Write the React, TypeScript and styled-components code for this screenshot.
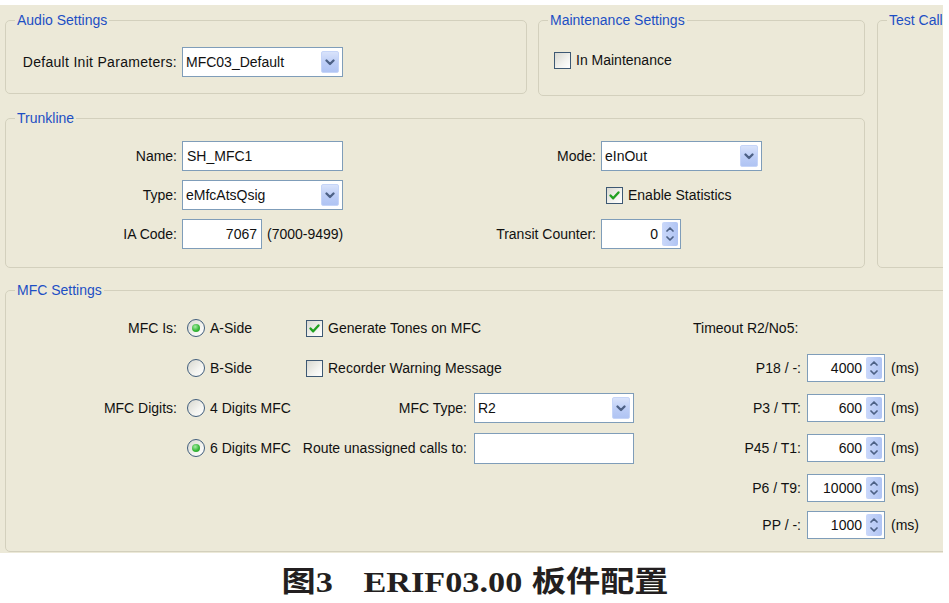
import React from "react";
import styled, { createGlobalStyle } from "styled-components";

const Global = createGlobalStyle`
  html, body { margin: 0; padding: 0; background: #fff; }
  body {
    font-family: "Liberation Sans", Arial, sans-serif;
    font-size: 14px;
    color: #111;
  }
  * { box-sizing: border-box; }
`;

const Screen = styled.div`
  width: 949px;
  height: 603px;
  display: flex;
  flex-direction: column;
  overflow: hidden;
`;

const Panel = styled.div`
  margin-top: 5px;
  width: 943px;
  height: 548px;
  flex: none;
  background: #ece9d8;
  overflow: hidden;
  display: grid;
  grid-template-columns: 860px 100px;
  column-gap: 12px;
  row-gap: 14px;
  align-content: start;
  padding: 7px 0 0 5px;
`;

const LeftColumn = styled.div`
  display: flex;
  flex-direction: column;
  gap: 14px;
`;

const TopRow = styled.div`
  display: flex;
  gap: 11px;
  align-items: flex-start;
`;

const Group = styled.fieldset<{ $w?: number; $h: number; $span?: boolean }>`
  margin: 0;
  padding: 0;
  min-width: 0;
  width: ${(p) => (p.$w ? `${p.$w}px` : "auto")};
  height: ${(p) => p.$h}px;
  border: 1px solid #d3d0bd;
  border-radius: 5px;
  ${(p) => (p.$span ? "grid-column: 1 / -1;" : "")}
`;

const Legend = styled.legend`
  margin-left: 9px;
  padding: 0 2px;
  color: #1d4fc4;
  font-size: 14px;
  line-height: 16px;
`;

const Body = styled.div<{ $t: number; $l: number }>`
  padding: ${(p) => p.$t}px 0 0 ${(p) => p.$l}px;
`;

const Row = styled.div`
  display: flex;
  align-items: center;
  gap: 5px;
  height: 30px;
`;

const FieldLabel = styled.span<{ $w?: number; $spread?: boolean }>`
  white-space: nowrap;
  text-align: right;
  ${(p) => (p.$w ? `width: ${p.$w}px; flex: none;` : "")}
  ${(p) => (p.$spread ? "letter-spacing: 0.3px;" : "")}
`;

const Plain = styled.span`
  white-space: nowrap;
`;

/* ---------- controls ---------- */

const TextField = styled.div<{ $w: number; $h?: number; $right?: boolean }>`
  width: ${(p) => p.$w}px;
  height: ${(p) => p.$h ?? 30}px;
  flex: none;
  display: flex;
  align-items: center;
  justify-content: ${(p) => (p.$right ? "flex-end" : "flex-start")};
  padding: 0 4px;
  border: 1px solid #7f9db9;
  background: #fff;
  white-space: nowrap;
`;

const SelectBox = styled.div<{ $w: number; $h?: number }>`
  width: ${(p) => p.$w}px;
  height: ${(p) => p.$h ?? 30}px;
  flex: none;
  display: flex;
  border: 1px solid #7f9db9;
  background: #fff;
`;

const SelectValue = styled.span`
  flex: 1;
  align-self: center;
  padding-left: 3px;
  white-space: nowrap;
  overflow: hidden;
`;

const DropButton = styled.span`
  width: 18px;
  flex: none;
  margin: 3px 3px 3px 0;
  border-radius: 2px;
  border: 1px solid #c6d5f8;
  background: linear-gradient(180deg, #d9e3fb 0%, #bccdf6 55%, #b0c4f3 100%);
  display: flex;
  align-items: center;
  justify-content: center;
`;

const SpinBox = styled.div<{ $w: number; $h?: number }>`
  width: ${(p) => p.$w}px;
  height: ${(p) => p.$h ?? 30}px;
  flex: none;
  display: flex;
  border: 1px solid #7f9db9;
  background: #fff;
`;

const SpinValue = styled.span`
  flex: 1;
  align-self: center;
  text-align: right;
  padding-right: 4px;
  white-space: nowrap;
`;

const SpinButtons = styled.span`
  width: 16px;
  flex: none;
  margin: 2px 2px 2px 0;
  border-radius: 2px;
  background: linear-gradient(90deg, #cad8fa 0%, #b0c4f3 100%);
  display: flex;
  flex-direction: column;
  align-items: center;
  justify-content: space-evenly;
`;

const Option = styled.label`
  display: flex;
  align-items: center;
  gap: 5px;
  white-space: nowrap;
`;

const CheckBox = styled.span`
  width: 17px;
  height: 17px;
  flex: none;
  border: 1px solid #3d5873;
  background: linear-gradient(135deg, #d8d8d0 0%, #f3f3ef 60%, #ffffff 100%);
  display: inline-flex;
  align-items: center;
  justify-content: center;
`;

const RadioCircle = styled.span`
  width: 18px;
  height: 18px;
  flex: none;
  border-radius: 50%;
  border: 1px solid #405d7c;
  background: linear-gradient(135deg, #d6d6ce 0%, #f4f4f0 60%, #ffffff 100%);
  display: inline-flex;
  align-items: center;
  justify-content: center;
`;

const RadioDot = styled.span`
  width: 8px;
  height: 8px;
  border-radius: 50%;
  background: radial-gradient(circle at 40% 35%, #a4eca4 0%, #38b838 55%, #1f9a1f 100%);
`;

/* ---------- layout of groups ---------- */

const TrunkGrid = styled.div`
  display: grid;
  grid-template-columns: 171px 161px 248px 161px;
  grid-auto-rows: 30px;
  column-gap: 5px;
  row-gap: 9px;
  align-items: center;
`;

const Indent = styled.div<{ $l: number }>`
  padding-left: ${(p) => p.$l}px;
  display: flex;
  align-items: center;
  gap: 7px;
`;

const MfcBody = styled.div`
  display: flex;
  align-items: flex-start;
  padding: 15px 0 0 0;
`;

const MfcGrid = styled.div`
  display: grid;
  grid-template-columns: 171px 123px 338px;
  grid-auto-rows: 30px;
  row-gap: 10px;
  align-items: center;
`;

const TimeoutGrid = styled.div`
  margin-left: 55px;
  display: grid;
  grid-template-columns: 108px 78px auto;
  grid-template-rows: repeat(5, 30px) 24px;
  column-gap: 6px;
  row-gap: 10px;
  align-items: center;
`;

const TimeoutTitle = styled.span`
  grid-column: 1 / -1;
  white-space: nowrap;
`;

const Caption = styled.div`
  flex: 1;
  display: flex;
  align-items: center;
  justify-content: center;
  padding: 9px 0 0 2px;
`;

const CaptionText = styled.div`
  display: inline-flex;
  align-items: baseline;
  font-family: "Liberation Serif", "Noto Sans CJK SC", serif;
  font-weight: 700;
  font-size: 29px;
  line-height: 1;
  color: #231f20;
  transform: scaleX(1.18);
`;

const CaptionPart = styled.span<{ $gap?: number }>`
  margin-left: ${(p) => p.$gap ?? 0}px;
  white-space: nowrap;
`;

/* ---------- small widgets ---------- */

const Chevron = () => (
  <svg width="10" height="7" viewBox="0 0 10 7">
    <path d="M1.5 1.5 L5 5 L8.5 1.5" fill="none" stroke="#4d6185" strokeWidth="2.3" strokeLinecap="round" strokeLinejoin="round" />
  </svg>
);

const Select = ({ w, h, value }: { w: number; h?: number; value: string }) => (
  <SelectBox $w={w} $h={h}>
    <SelectValue>{value}</SelectValue>
    <DropButton>
      <Chevron />
    </DropButton>
  </SelectBox>
);

const Spinner = ({ w, h, value }: { w: number; h?: number; value: string }) => (
  <SpinBox $w={w} $h={h}>
    <SpinValue>{value}</SpinValue>
    <SpinButtons>
      <svg width="8" height="5" viewBox="0 0 8 5">
        <path d="M1 4 L4 1 L7 4" fill="none" stroke="#4d6185" strokeWidth="1.7" strokeLinecap="round" strokeLinejoin="round" />
      </svg>
      <svg width="8" height="5" viewBox="0 0 8 5">
        <path d="M1 1 L4 4 L7 1" fill="none" stroke="#4d6185" strokeWidth="1.7" strokeLinecap="round" strokeLinejoin="round" />
      </svg>
    </SpinButtons>
  </SpinBox>
);

const Check = ({ on, label }: { on?: boolean; label: string }) => (
  <Option>
    <CheckBox>
      {on && (
        <svg width="13" height="13" viewBox="0 0 13 13">
          <path d="M2.5 6.5 L5.2 9.3 L10.5 3.5" fill="none" stroke="#21a121" strokeWidth="2.4" strokeLinecap="round" strokeLinejoin="round" />
        </svg>
      )}
    </CheckBox>
    {label}
  </Option>
);

const Radio = ({ on, label }: { on?: boolean; label: string }) => (
  <Option>
    <RadioCircle>{on && <RadioDot />}</RadioCircle>
    {label}
  </Option>
);

const timeouts = [
  { label: "P18 / -:", value: "4000" },
  { label: "P3 / TT:", value: "600" },
  { label: "P45 / T1:", value: "600" },
  { label: "P6 / T9:", value: "10000" },
  { label: "PP / -:", value: "1000" },
];

export default function App() {
  return (
    <Screen>
      <Global />
      <Panel>
        <LeftColumn>
          <TopRow>
            <Group $w={522} $h={82}>
              <Legend>Audio Settings</Legend>
              <Body $t={19} $l={16}>
                <Row>
                  <FieldLabel $w={155} $spread>
                    Default Init Parameters:
                  </FieldLabel>
                  <Select w={161} value="MFC03_Default" />
                </Row>
              </Body>
            </Group>
            <Group $w={327} $h={84}>
              <Legend>Maintenance Settings</Legend>
              <Body $t={17} $l={15}>
                <Row>
                  <Check label="In Maintenance" />
                </Row>
              </Body>
            </Group>
          </TopRow>
          <Group $h={158}>
            <Legend>Trunkline</Legend>
            <Body $t={15} $l={0}>
              <TrunkGrid>
                <FieldLabel>Name:</FieldLabel>
                <TextField $w={161}>SH_MFC1</TextField>
                <FieldLabel>Mode:</FieldLabel>
                <Select w={161} value="eInOut" />

                <FieldLabel>Type:</FieldLabel>
                <Select w={161} value="eMfcAtsQsig" />
                <span />
                <Indent $l={5}>
                  <Check on label="Enable Statistics" />
                </Indent>

                <FieldLabel>IA Code:</FieldLabel>
                <Row>
                  <TextField $w={80} $right>
                    7067
                  </TextField>
                  <Plain>(7000-9499)</Plain>
                </Row>
                <FieldLabel>Transit Counter:</FieldLabel>
                <Spinner w={80} value="0" />
              </TrunkGrid>
            </Body>
          </Group>
        </LeftColumn>

        <Group $h={256}>
          <Legend>Test Call</Legend>
        </Group>

        <Group $h={270} $span>
          <Legend>MFC Settings</Legend>
          <MfcBody>
            <MfcGrid>
              <FieldLabel>MFC Is:</FieldLabel>
              <Indent $l={10}>
                <Radio on label="A-Side" />
              </Indent>
              <Indent $l={6}>
                <Check on label="Generate Tones on MFC" />
              </Indent>

              <span />
              <Indent $l={10}>
                <Radio label="B-Side" />
              </Indent>
              <Indent $l={6}>
                <Check label="Recorder Warning Message" />
              </Indent>

              <FieldLabel>MFC Digits:</FieldLabel>
              <Indent $l={10}>
                <Radio label="4 Digits MFC" />
              </Indent>
              <Indent $l={0}>
                <FieldLabel $w={167}>MFC Type:</FieldLabel>
                <Select w={160} h={30} value="R2" />
              </Indent>

              <span />
              <Indent $l={10}>
                <Radio on label="6 Digits MFC" />
              </Indent>
              <Indent $l={0}>
                <FieldLabel $w={167}>Route unassigned calls to:</FieldLabel>
                <TextField $w={160} $h={31} />
              </Indent>
            </MfcGrid>

            <TimeoutGrid>
              <TimeoutTitle>Timeout R2/No5:</TimeoutTitle>
              {timeouts.map((t) => (
                <React.Fragment key={t.label}>
                  <FieldLabel>{t.label}</FieldLabel>
                  <Spinner w={78} h={28} value={t.value} />
                  <Plain>(ms)</Plain>
                </React.Fragment>
              ))}
            </TimeoutGrid>
          </MfcBody>
        </Group>
      </Panel>
      <Caption>
        <CaptionText>
          <CaptionPart>图3</CaptionPart>
          <CaptionPart $gap={26}>ERIF03.00</CaptionPart>
          <CaptionPart $gap={8}>板件配置</CaptionPart>
        </CaptionText>
      </Caption>
    </Screen>
  );
}
